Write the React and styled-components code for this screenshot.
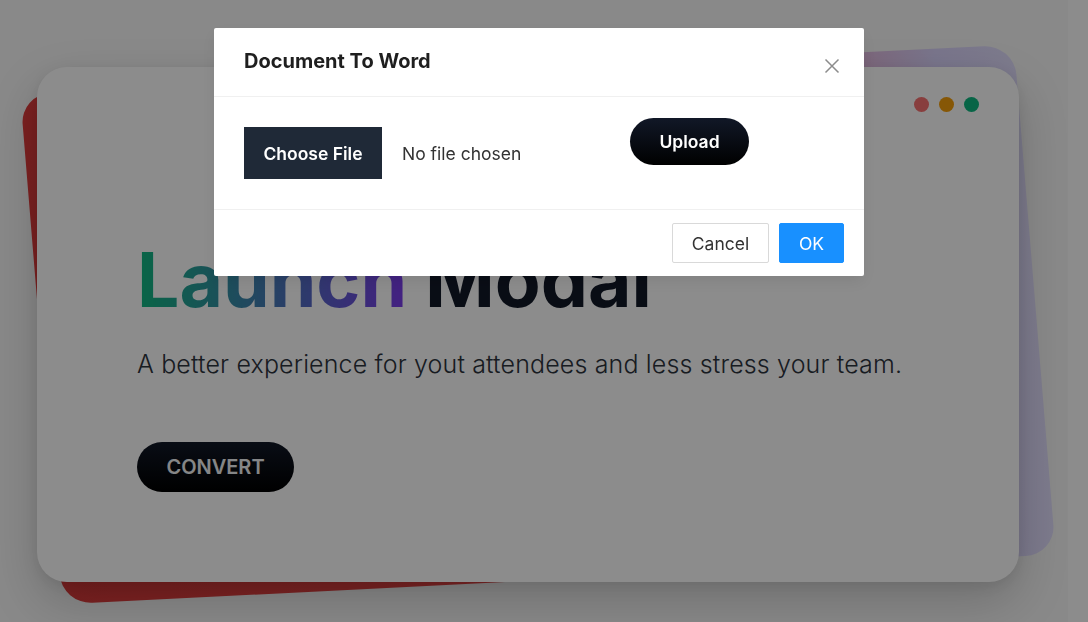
import styled, { createGlobalStyle } from "styled-components";

const GlobalStyle = createGlobalStyle`
  * { box-sizing: border-box; }
  html, body { margin: 0; padding: 0; }
  body {
    background: #ffffff;
    font-family: Inter, "Noto Sans", Arial, sans-serif;
    overflow: hidden;
  }
`;

function App() {
  return (
    <>
      <GlobalStyle />
      <Page>
        <CardStack>
          <Card>
            <Dots>
              <Dot color="#f87171" />
              <Dot color="#f59e0b" />
              <Dot color="#10b981" />
            </Dots>
            <Heading>
              <GradientWord>Launch</GradientWord> Modal
            </Heading>
            <Subtitle>A better experience for yout attendees and less stress your team.</Subtitle>
            <ConvertButton>CONVERT</ConvertButton>
          </Card>
        </CardStack>
      </Page>

      <Mask />
      <ModalWrap>
        <Modal>
          <ModalHeader>
            <ModalTitle>Document To Word</ModalTitle>
            <CloseButton aria-label="Close">
              <svg width="16" height="16" viewBox="0 0 16 16">
                <path d="M1.5 1.5 L14.5 14.5 M14.5 1.5 L1.5 14.5" stroke="#8c8c8c" strokeWidth="1.5" fill="none" />
              </svg>
            </CloseButton>
          </ModalHeader>
          <ModalBody>
            <FilePicker>
              <ChooseButton>Choose File</ChooseButton>
              <FileName>No file chosen</FileName>
            </FilePicker>
            <UploadButton>Upload</UploadButton>
          </ModalBody>
          <ModalFooter>
            <FooterButton width="97px">Cancel</FooterButton>
            <FooterButton width="65px" primary>OK</FooterButton>
          </ModalFooter>
        </Modal>
      </ModalWrap>
    </>
  );
}

export default App;

const Page = styled.main`
  width: calc(100% - 20px);
  height: 622px;
  background: #f9f9f9;
  padding: 67px 0 0 37px;
`;

const CardStack = styled.div`
  position: relative;
  width: 982px;
  height: 515px;

  /* tilted gradient sheet peeking out behind the card */
  &::before {
    content: "";
    position: absolute;
    inset: 0;
    border-radius: 30px;
    background: linear-gradient(90deg, #e03c3c 0%, #e54545 48%, #e9a3c6 78%, #ddd6fe 92%, #e4e0ff 100%);
    transform: matrix(1.012, -0.0506, 0.0812, 0.99, 10, 0);
  }
`;

const Card = styled.section`
  position: relative;
  height: 100%;
  background: #ffffff;
  border-radius: 30px;
  padding: 30px 40px 0 100px;
  box-shadow: 0 20px 50px rgba(0, 0, 0, 0.18), 0 4px 14px rgba(0, 0, 0, 0.08);
`;

const Dots = styled.div`
  display: flex;
  justify-content: flex-end;
  gap: 10px;
`;

const Dot = styled.span`
  width: 15px;
  height: 15px;
  border-radius: 50%;
  background: ${(p) => p.color};
`;

const Heading = styled.h1`
  margin: 123px 0 0;
  font-size: 75px;
  line-height: 90px;
  font-weight: 700;
  color: #111827;
`;

const GradientWord = styled.span`
  background: linear-gradient(90deg, #10b981 0%, #7c3aed 100%);
  -webkit-background-clip: text;
  background-clip: text;
  color: transparent;
`;

const Subtitle = styled.p`
  margin: 21px 0 0;
  font-size: 25px;
  line-height: 36px;
  font-weight: 300;
  letter-spacing: 0.15px;
  color: #2d333d;
`;

const ConvertButton = styled.button`
  margin-top: 60px;
  width: 157px;
  height: 50px;
  border: none;
  border-radius: 25px;
  background: linear-gradient(180deg, #111827 0%, #000000 100%);
  color: #f3f4f6;
  font-family: inherit;
  font-size: 20px;
  font-weight: 600;
`;

const Mask = styled.div`
  position: fixed;
  inset: 0;
  background: rgba(0, 0, 0, 0.45);
`;

const ModalWrap = styled.div`
  position: fixed;
  top: 28px;
  left: 214px;
`;

const Modal = styled.div`
  width: 650px;
  background: #ffffff;
  border-radius: 2px;
  box-shadow: 0 6px 16px rgba(0, 0, 0, 0.08);
`;

const ModalHeader = styled.header`
  height: 69px;
  display: flex;
  align-items: center;
  justify-content: space-between;
  padding: 0 24px 0 30px;
  border-bottom: 1px solid #f0f0f0;
`;

const ModalTitle = styled.h2`
  margin: -3px 0 0;
  font-size: 20px;
  font-weight: 700;
  color: #1f1f1f;
`;

const CloseButton = styled.button`
  border: none;
  background: none;
  padding: 0;
  margin-top: 8px;
  display: flex;
`;

const ModalBody = styled.div`
  height: 113px;
  display: flex;
  align-items: flex-start;
  padding: 21px 30px 0 30px;
  border-bottom: 1px solid #f0f0f0;
`;

const FilePicker = styled.div`
  display: flex;
  align-items: center;
  gap: 20px;
  margin-top: 9px;
  width: 386px;
`;

const ChooseButton = styled.span`
  width: 138px;
  height: 52px;
  display: flex;
  align-items: center;
  justify-content: center;
  background: #1f2937;
  color: #ffffff;
  font-size: 17.5px;
  font-weight: 600;
`;

const FileName = styled.span`
  font-size: 17.5px;
  color: #333333;
`;

const UploadButton = styled.button`
  width: 119px;
  height: 47px;
  border: none;
  border-radius: 24px;
  background: linear-gradient(180deg, #111827 0%, #000000 100%);
  color: #ffffff;
  font-family: inherit;
  font-size: 17.5px;
  font-weight: 600;
`;

const ModalFooter = styled.footer`
  height: 66px;
  display: flex;
  align-items: center;
  justify-content: flex-end;
  gap: 10px;
  padding: 0 20px;
`;

const FooterButton = styled.button`
  width: ${(p) => p.width};
  height: 40px;
  padding: 0;
  border: 1px solid ${(p) => (p.primary ? "#1890ff" : "#d9d9d9")};
  border-radius: 2px;
  background: ${(p) => (p.primary ? "#1890ff" : "#ffffff")};
  color: ${(p) => (p.primary ? "#ffffff" : "#333333")};
  font-family: inherit;
  font-size: 17.5px;
`;
